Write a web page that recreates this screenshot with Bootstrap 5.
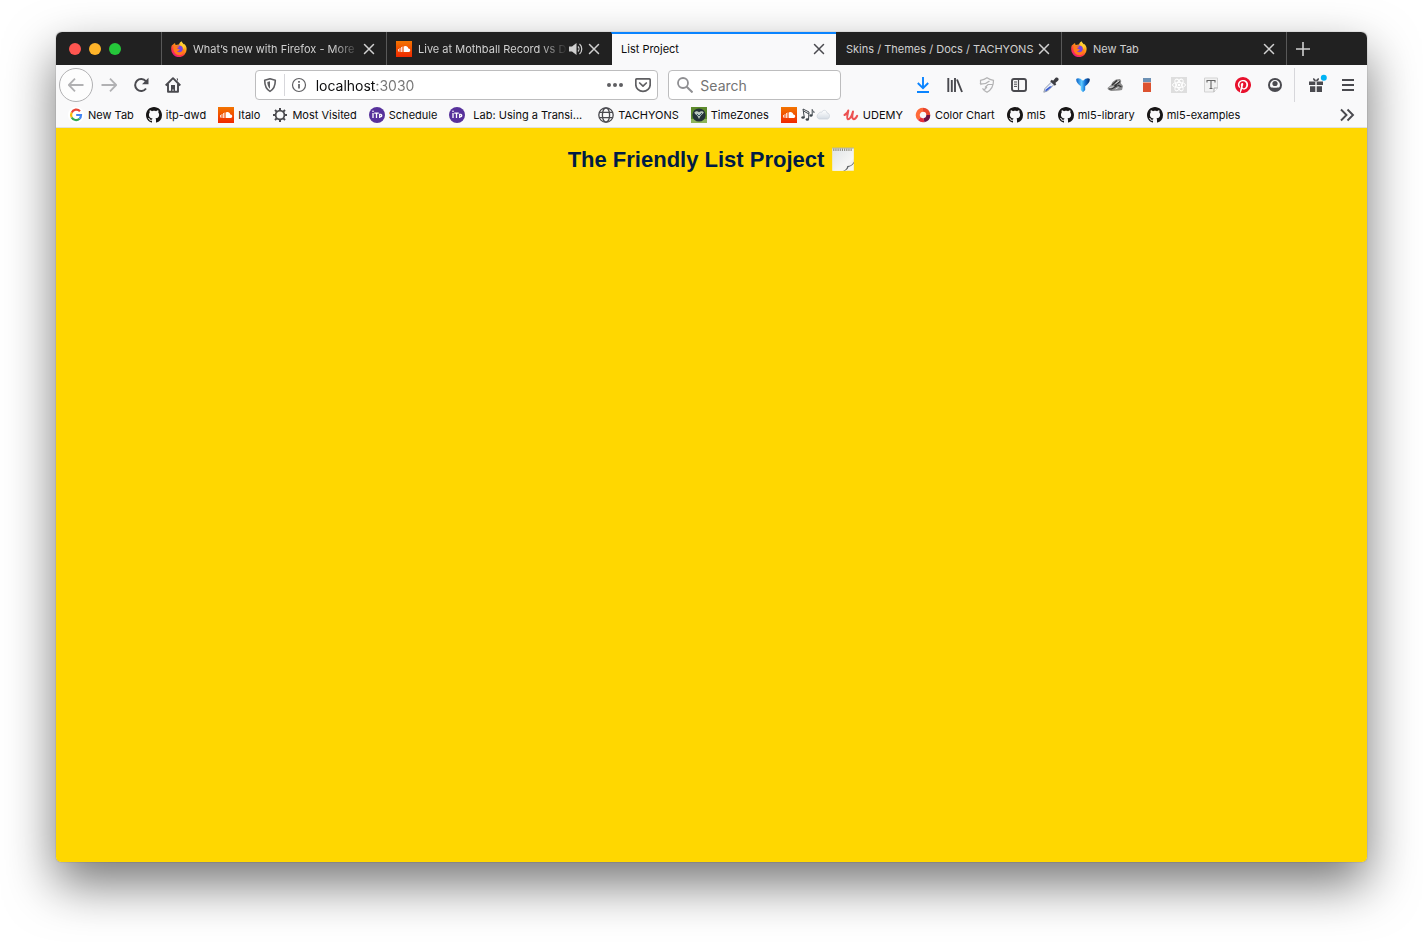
<!DOCTYPE html>
<html lang="en">
<head>
<meta charset="utf-8">
<meta name="viewport" content="width=device-width, initial-scale=1">
<title>List Project</title>
<link href="https://cdn.jsdelivr.net/npm/bootstrap@5.3.0/dist/css/bootstrap.min.css" rel="stylesheet">
<style>
  body { background: #fff; font-family: Inter, "Liberation Sans", sans-serif; font-size: 11px; line-height: 16px; color: #0c0c0d; padding: 32px 56px 80px; }
  .browser { border-radius: 5px; box-shadow: 0 0 1px rgba(0,0,0,.6), 0 22px 50px rgba(0,0,0,.54); }
  .ico { width: 16px; height: 16px; flex: none; display: block; }
  .browser button { border: 0; background: none; padding: 0; color: inherit; display: flex; align-items: center; justify-content: center; flex: none; }

  /* tab strip */
  .tabstrip { height: 33px; background: #212121; color: #d0d0d0; }
  .lights { width: 105px; padding-left: 13px; gap: 8px; }
  .light { width: 12px; height: 12px; border-radius: 50%; }
  .light-red { background: #ff5650; } .light-amber { background: #ffb429; } .light-green { background: #25c73a; }
  .tabs .nav-item { flex: 1 1 0; min-width: 0; border-left: 1px solid #585858; padding: 0 9px; }
  .tabs .nav-item > .ico { margin-right: 6px; }
  .tabs .nav-item.current { background: #f9f9fa; color: #0c0c0d; border-left-color: #212121; border-top: 2px solid #0a84ff; padding-bottom: 2px; }
  .current button { color: #4a4a4f; }
  .tabs .nav-item.current + .nav-item { border-left-color: #212121; }
  .tab-title { flex: 1 1 0; min-width: 0; overflow: hidden; white-space: nowrap; color: inherit; text-decoration: none; }
  .fading { -webkit-mask-image: linear-gradient(90deg, #000 calc(100% - 28px), transparent); mask-image: linear-gradient(90deg, #000 calc(100% - 28px), transparent); }
  .tab-tools { gap: 2px; }
  .newtab { width: 81px; border-left: 1px solid #585858; padding-left: 8px; }

  /* toolbar */
  .chrome { background: #f9f9fa; color: #4a4a4f; }
  .toolbar { height: 40px; padding: 0 3px; }
  .chrome .tool { width: 32px; height: 32px; }
  .chrome .back { width: 34px; height: 34px; border: 1px solid #b1b1b3; border-radius: 50%; background: #fdfdfd; color: #b1b1b3; }
  .chrome .dim { color: #b1b1b3; }
  .spring { flex: 66 1 0; }
  .field { height: 30px; background: #fff; border: 1px solid #bdbdbe; border-radius: 4px; min-width: 0; }
  .address { flex: 404 1 0; margin-right: 10px; }
  .finder { flex: 172 1 0; }
  .field input { border: 0; outline: 0; padding: 2px 0 0; flex: 1 1 0; min-width: 0; width: 0; font-size: 14px; line-height: 20px; background-color: transparent; }
  .field input::placeholder { color: #737373; opacity: 1; }
  .address input { margin-left: 3px; color: transparent; background-image: linear-gradient(90deg, #0c0c0d 61px, #737373 61px); -webkit-background-clip: text; background-clip: text; }
  .address .tool { width: 28px; height: 28px; }
  .finder label { width: 31px; padding-left: 8px; color: #8f8f92; }
  .rule { width: 1px; background: #d7d7db; }
  .rule-field { height: 22px; }
  .rule-bar { height: 34px; margin: 0 5px 0 3px; }

  /* bookmarks */
  .bookmarks { height: 23px; padding: 0 12px 3px; gap: 12px; border-bottom: 1px solid #e0e0e1; }
  .bookmarks a { display: flex; align-items: center; gap: 4px; color: #0c0c0d; text-decoration: none; white-space: nowrap; }

  .page { background: #ffd700; padding-top: 18px; border-radius: 0 0 5px 5px; }
  .page h1 { font: bold 22px/28px "Liberation Sans", Arial, sans-serif; color: #001b44; gap: 7px; margin: 0; }
  .pad { width: 24px; height: 26px; }
</style>
</head>
<body class="min-vh-100 d-flex flex-column">

<svg width="0" height="0" class="position-absolute" aria-hidden="true">
  <defs>
    <linearGradient id="fxBody" x1=".85" y1="0" x2=".2" y2="1"><stop offset="0" stop-color="#fff44f"/><stop offset=".4" stop-color="#ff980e"/><stop offset=".7" stop-color="#ff3647"/><stop offset="1" stop-color="#e31587"/></linearGradient>
    <linearGradient id="scBg" x1="0" y1="0" x2="0" y2="1"><stop offset="0" stop-color="#f27500"/><stop offset="1" stop-color="#f02800"/></linearGradient>
    <linearGradient id="funnel" x1="0" y1="0" x2="1" y2="0"><stop offset="0" stop-color="#0a5fc6"/><stop offset=".4" stop-color="#5fcaff"/><stop offset=".65" stop-color="#1173d6"/><stop offset="1" stop-color="#06275f"/></linearGradient>
    <linearGradient id="paper" x1="0" y1="0" x2="1" y2="1"><stop offset="0" stop-color="#dfe3e6"/><stop offset=".7" stop-color="#f6f6f4"/><stop offset="1" stop-color="#cfd0d0"/></linearGradient>
    <linearGradient id="cloudFill" x1="0" y1="0" x2="0" y2="1"><stop offset="0" stop-color="#fff"/><stop offset="1" stop-color="#d5dce4"/></linearGradient>
  </defs>
  <symbol id="x" viewBox="0 0 16 16"><path d="M3.500 3.500l9 9m0-9l-9 9" stroke="currentColor" stroke-width="1.500" stroke-linecap="round"/></symbol>
  <symbol id="firefox" viewBox="0 0 16 16">
    <path d="M15.400 6.200C15 4.600 14 3.400 13 2.700c.2.500.3.900.3 1.200C12.300 2.200 10.900 1.800 10.600.2 9 1 8.200 2.300 8 3.500 6.800 3.400 5.700 3.600 5 4.100 4.200 3.500 4.100 2.700 4.100 1.900 2.900 2.500 2.100 3.300 1.500 4.300L1.300 3.600C.4 5 .1 6.800.2 8.400a7.700 7.700 0 0 0 15.400.1c0-.8 0-1.600-.2-2.300z" fill="url(#fxBody)"/>
    <circle cx="8" cy="8.300" r="3.900" fill="#7542e5"/>
    <path d="M2.500 5.700c1.300-1.200 2.500-1 3.400-.4.900-.2 1.800 0 2.400.3-.1.900-1.700 1.100-2 1.600.1 1 1.400.6 2.400 1C8.300 10 6.600 9.700 5.900 10.600c2.500 1.700 6.200.4 6-3C14 10 12.800 13.700 9 14.200 4.400 14.600 1.700 10 2.500 5.700z" fill="#ff7a1c"/>
    <path d="M9 4c2.500.6 3.600 2.300 3.500 4.300 1-1.200 1.200-3 .3-4.500L11 1.800z" fill="#ffce32"/>
  </symbol>
  <symbol id="soundcloud" viewBox="0 0 16 16"><path fill="url(#scBg)" d="M0 0h16v16H0z"/><path d="M2.500 8v2.500M4 7v4M5.500 6V11M7 5.500V11" stroke="#fff" stroke-width=".8"/><path d="M8 5.500c2-1 4 .1 4.300 2 1-.2 1.900.6 1.900 1.700S13.400 11 12.500 11H8z" fill="#fff"/></symbol>
  <symbol id="github" viewBox="0 0 16 16"><path fill="#181616" d="M8 0C3.580 0 0 3.580 0 8c0 3.540 2.290 6.530 5.470 7.590.4.070.55-.17.55-.38 0-.19-.01-.82-.01-1.490-2.010.37-2.530-.49-2.690-.94-.09-.23-.48-.94-.82-1.130-.28-.15-.68-.52-.01-.53.63-.01 1.080.58 1.230.82.72 1.210 1.870.87 2.330.66.07-.52.28-.87.51-1.070-1.780-.2-3.640-.89-3.640-3.950 0-.87.31-1.590.82-2.150-.08-.2-.36-1.020.08-2.120 0 0 .67-.21 2.200.82.64-.18 1.320-.27 2-.27s1.360.09 2 .27c1.530-1.040 2.200-.82 2.200-.82.44 1.100.16 1.920.08 2.120.51.56.82 1.270.82 2.150 0 3.070-1.870 3.750-3.650 3.950.29.25.54.73.54 1.480 0 1.070-.01 1.930-.01 2.200 0 .21.15.46.55.38A8.010 8.010 0 0 0 16 8c0-4.420-3.580-8-8-8z"/></symbol>
  <symbol id="itp" viewBox="0 0 16 16"><circle cx="8" cy="8" r="8" fill="#57319b"/><path d="M4 6v5M5.300 6.200h4.400M7.500 6.200V11M10.700 11V7.300h1.200a1.200 1.200 0 0 1 0 2.300h-1.200" stroke="#fff" stroke-width="1.300" fill="none"/><circle cx="4" cy="4.300" r=".8" fill="#fff"/></symbol>
</svg>

<div class="browser d-flex flex-column flex-grow-1">
  <header>
    <div class="tabstrip d-flex rounded-top">
      <div class="lights d-flex align-items-center flex-shrink-0"><span class="light light-red"></span><span class="light light-amber"></span><span class="light light-green"></span></div>
      <ul class="tabs nav flex-nowrap flex-grow-1 align-items-stretch">
        <li class="nav-item d-flex align-items-center">
          <svg class="ico"><use href="#firefox"/></svg><a class="tab-title fading" href="#">What’s new with Firefox - More</a>
          <button type="button" aria-label="Close tab"><svg class="ico"><use href="#x"/></svg></button>
        </li>
        <li class="nav-item d-flex align-items-center">
          <svg class="ico"><use href="#soundcloud"/></svg><a class="tab-title fading" href="#">Live at Mothball Record vs D</a>
          <span class="tab-tools d-flex"><button type="button" aria-label="Mute tab"><svg class="ico" viewBox="0 0 16 16"><path d="M1 5.500h3L8.500 2v12L4 10.500H1z" fill="currentColor"/><path d="M10 5.500c1.300 1.300 1.300 3.700 0 5M11.500 3c3 2.500 3 7.500 0 10" fill="none" stroke="currentColor" stroke-width="1.200"/></svg></button>
          <button type="button" aria-label="Close tab"><svg class="ico"><use href="#x"/></svg></button></span>
        </li>
        <li class="nav-item current d-flex align-items-center">
          <a class="tab-title" href="#" aria-current="page">List Project</a>
          <button type="button" aria-label="Close tab"><svg class="ico"><use href="#x"/></svg></button>
        </li>
        <li class="nav-item d-flex align-items-center">
          <a class="tab-title" href="#">Skins / Themes / Docs / TACHYONS</a>
          <button type="button" aria-label="Close tab"><svg class="ico"><use href="#x"/></svg></button>
        </li>
        <li class="nav-item d-flex align-items-center">
          <svg class="ico"><use href="#firefox"/></svg><a class="tab-title" href="#">New Tab</a>
          <button type="button" aria-label="Close tab"><svg class="ico"><use href="#x"/></svg></button>
        </li>
      </ul>
      <div class="newtab d-flex align-items-center flex-shrink-0"><button type="button" aria-label="Open a new tab"><svg class="ico" viewBox="0 0 16 16"><path d="M8 1v14M1 8h14" stroke="currentColor" stroke-width="1.600"/></svg></button></div>
    </div>

    <div class="chrome">
      <div class="toolbar d-flex align-items-center">
        <button type="button" class="back" aria-label="Back"><svg class="ico" viewBox="0 0 16 16"><path d="M15.500 8H1M7 1.700L.8 8 7 14.300" fill="none" stroke="currentColor" stroke-width="1.800"/></svg></button>
        <button type="button" class="tool dim" aria-label="Forward"><svg class="ico" viewBox="0 0 16 16"><path d="M.5 8H15M9 1.700L15.200 8 9 14.300" fill="none" stroke="currentColor" stroke-width="1.800"/></svg></button>
        <button type="button" class="tool" aria-label="Reload"><svg class="ico" viewBox="0 0 16 16"><path d="M13 11.500A6 6 0 1 1 12.800 4.200" fill="none" stroke="currentColor" stroke-width="2"/><path d="M15.500.8v6.400H9z" fill="currentColor"/></svg></button>
        <button type="button" class="tool" aria-label="Home"><svg class="ico" viewBox="0 0 16 16"><path d="M.7 8.500L8 1.200l7.300 7.300M3 7v7.700h10V7" fill="none" stroke="currentColor" stroke-width="1.900" stroke-linejoin="round"/><path d="M6 8h4v6.500H8.600v-2H7.400v2H6zM11.500 1.500H13v3z" fill="currentColor"/></svg></button>
        <div class="spring"></div>
        <div class="field address d-flex align-items-center">
          <button type="button" class="tool" aria-label="Tracking protection"><svg class="ico" viewBox="0 0 16 16"><path d="M8 1.800l5.300 1.500C13.300 8.500 12 12.200 8 14.400 4 12.200 2.700 8.500 2.700 3.300z" fill="none" stroke="#5f5f62" stroke-width="1.600" stroke-linejoin="round"/><path d="M8 4.300L5.300 5c.1 3 .8 5.100 2.700 6.700z" fill="#5f5f62"/></svg></button>
          <span class="rule rule-field"></span>
          <button type="button" class="tool" aria-label="Site information"><svg class="ico" viewBox="0 0 16 16"><circle cx="8" cy="8" r="6.500" fill="none" stroke="#5f5f62" stroke-width="1.200"/><path d="M8 7v4.500M8 4v1.700" stroke="#5f5f62" stroke-width="1.700"/></svg></button>
          <input type="text" value="localhost:3030" aria-label="Address">
          <button type="button" class="tool" aria-label="Page actions"><svg class="ico" viewBox="0 0 16 16"><g fill="#5f5f62"><circle cx="2" cy="8" r="2"/><circle cx="8" cy="8" r="2"/><circle cx="14" cy="8" r="2"/></g></svg></button>
          <button type="button" class="tool" aria-label="Save to Pocket"><svg class="ico" viewBox="0 0 16 16"><path d="M2 1.800h12a1.200 1.200 0 0 1 1.200 1.200v4.500a7.200 6.800 0 0 1-14.400 0V3A1.200 1.200 0 0 1 2 1.800zM4.700 6L8 9.200 11.300 6" fill="none" stroke="#5f5f62" stroke-width="1.700" stroke-linecap="round" stroke-linejoin="round"/></svg></button>
        </div>
        <div class="field finder d-flex align-items-center">
          <label for="find"><svg class="ico" viewBox="0 0 16 16"><circle cx="6" cy="6" r="5" fill="none" stroke="currentColor" stroke-width="1.800"/><path d="M9.700 9.700l5.800 5.800" stroke="currentColor" stroke-width="2"/></svg></label>
          <input id="find" type="text" placeholder="Search" aria-label="Search">
        </div>
        <div class="spring"></div>
        <button type="button" class="tool" aria-label="Downloads"><svg class="ico" viewBox="0 0 16 16"><path d="M8 0v11M2.800 6L8 11.200 13.200 6M2 15h12" fill="none" stroke="#0a84ff" stroke-width="1.900"/></svg></button>
        <button type="button" class="tool" aria-label="Library"><svg class="ico" viewBox="0 0 16 16"><path d="M1.300 1v14M4.800 3v12M8 1v14M10 2.500L15 15" stroke="currentColor" stroke-width="1.900"/></svg></button>
        <button type="button" class="tool" aria-label="Privacy shield"><svg class="ico" viewBox="0 0 16 16"><path d="M2 8C1.500 6.500 1.400 5 1.500 3.300 4.500 3 6.500 2 8 .8 10 2.300 12 3 14.500 3.300c.1 5.500-2 9.500-6.500 12-2-1-3.500-2.500-4.500-4M.8 6.500c3 .8 6.500.3 9.700-2.500M6 10.500L9 7.500h5.500M5 13l3-3" fill="none" stroke="#b3b3b4" stroke-width="1.200"/></svg></button>
        <button type="button" class="tool" aria-label="Sidebars"><svg class="ico" viewBox="0 0 16 16"><rect x="1" y="2" width="14" height="12" rx="2" fill="none" stroke="currentColor" stroke-width="1.900"/><path d="M7.500 2v12" stroke="currentColor" stroke-width="1.200"/><path d="M3 5h3M3 7.200h3M3 9.400h3" stroke="currentColor"/></svg></button>
        <button type="button" class="tool" aria-label="Eyedropper"><svg class="ico" viewBox="0 0 16 16"><path d="M8.500 5L2 11.500.8 15.200 4.500 14 11 7.500z" fill="#e9eefb" stroke="#8e99ad"/><path d="M7 9.300l2 .2-5 4.300-1.800.5.500-1.800z" fill="#385bd1"/><path d="M7.200 4.200l1.600-1.400 1.300 1L12.600.8c1.800-1.300 4 .9 2.600 2.600L12.300 6l1 1.300-1.500 1.500z" fill="#3d3d42"/></svg></button>
        <button type="button" class="tool" aria-label="Filter"><svg class="ico" viewBox="0 0 16 16"><path d="M1.200 2C2.500.7 5.500 1.200 8 3.800 10.500 1.200 13.500.7 14.800 2c.3 3-2 5.500-4.600 7.300V13L8 15.200 5.800 13V9.300C3.200 7.500.9 5 1.200 2z" fill="url(#funnel)"/></svg></button>
        <button type="button" class="tool" aria-label="Badger"><svg class="ico" viewBox="0 0 16 16"><path d="M.5 11L4 8l1.500-3L9 2.500l4-.5 1.300 2-.6 2L16 9l-1 4-3 .5-8 .5-3-1.500z" fill="#8b8b8b"/><path d="M5 8l5-4.500M7.500 9L13 4.500M4.500 12l6-3.500M11 8l3.500 2M2 12h3" stroke="#333" stroke-width="1.200"/><path d="M2.500 10.500l4-.8M8.500 6.500L12 4M8.500 12l3-1.500" stroke="#ddd"/></svg></button>
        <button type="button" class="tool" aria-label="Colour blocks"><svg class="ico" viewBox="0 0 16 16"><path fill="#6d91b4" d="M4 1h8v4H4z"/><path fill="#dc5230" d="M4 5.500h8V15H4z"/></svg></button>
        <button type="button" class="tool" aria-label="React tools"><svg class="ico" viewBox="0 0 16 16"><path fill="#dedede" d="M0 0h16v16H0z"/><g fill="none" stroke="#fff"><ellipse cx="8" cy="8" rx="6.500" ry="2.600"/><ellipse cx="8" cy="8" rx="6.500" ry="2.600" transform="rotate(60 8 8)"/><ellipse cx="8" cy="8" rx="6.500" ry="2.600" transform="rotate(120 8 8)"/></g><circle cx="8" cy="8" r="1.300" fill="#fff"/></svg></button>
        <button type="button" class="tool" aria-label="Font finder"><svg class="ico" viewBox="0 0 16 16"><path d="M1.500 1h13v10l-3.500 4H1.500z" fill="#f2f2f2" stroke="#d3d3d3"/><path d="M14.500 11H11v4" fill="#fff" stroke="#aaa"/><path d="M4 5.500V3.500h8v2M8 3.500v8M6.500 11.500h3" fill="none" stroke="#666" stroke-width="1.100"/></svg></button>
        <button type="button" class="tool" aria-label="Pinterest"><svg class="ico" viewBox="0 0 16 16"><circle cx="8" cy="8" r="7.500" fill="#fff"/><path fill="#e8112d" d="M8 0a8 8 0 0 0-2.915 15.452c-.07-.633-.134-1.606.027-2.297.146-.625.938-3.977.938-3.977s-.239-.479-.239-1.187c0-1.113.645-1.943 1.448-1.943.682 0 1.012.512 1.012 1.127 0 .686-.437 1.712-.663 2.663-.188.796.4 1.446 1.185 1.446 1.422 0 2.515-1.500 2.515-3.664 0-1.915-1.377-3.254-3.342-3.254-2.276 0-3.612 1.707-3.612 3.471 0 .688.265 1.425.595 1.826a.24.24 0 0 1 .056.23c-.061.252-.196.796-.222.907-.035.146-.116.177-.268.107-1-.465-1.624-1.926-1.624-3.100 0-2.523 1.834-4.840 5.286-4.840 2.775 0 4.932 1.977 4.932 4.620 0 2.757-1.739 4.976-4.151 4.976-.811 0-1.573-.421-1.834-.919l-.498 1.902c-.181.695-.669 1.566-.995 2.097A8 8 0 1 0 8 0z"/></svg></button>
        <button type="button" class="tool" aria-label="Account"><svg class="ico" viewBox="0 0 16 16"><circle cx="8" cy="8" r="6" fill="none" stroke="currentColor" stroke-width="2"/><path d="M3 10c1.500.6 3 .8 5 .8s3.500-.2 5-.8c-1 3-3 4-5 4s-4-1-5-4z" fill="currentColor"/><circle cx="8" cy="6.500" r="2.600" fill="currentColor"/></svg></button>
        <span class="rule rule-bar"></span>
        <button type="button" class="tool" aria-label="What's new"><svg class="ico overflow-visible" viewBox="0 0 16 16"><path d="M1 4.500h6.300V8H1zM8.700 4.500H15V8H8.700zM2 9.200h5.300V15H2zM8.700 9.200H14V15H8.700z" fill="currentColor"/><path d="M8 4.500C5.500 4 4.800 2.500 5 1.200 6.500 1 7.500 2 8 4c.5-2 1.500-3 3-2.800.2 1.300-.5 2.800-3 3.300z" fill="currentColor"/><circle cx="15.800" cy=".8" r="3" fill="#00b3f4"/></svg></button>
        <button type="button" class="tool" aria-label="Menu"><svg class="ico" viewBox="0 0 16 16"><path d="M2 3h12M2 8h12M2 13h12" stroke="currentColor" stroke-width="1.900"/></svg></button>
      </div>

      <nav class="bookmarks d-flex align-items-center" aria-label="Bookmarks">
        <a href="#"><svg class="ico" viewBox="0 0 16 16"><circle cx="8" cy="8" r="8" fill="#fff"/><g fill="none" stroke-width="2.200"><path d="M12 4.300A5 5 0 0 0 3.700 5.600" stroke="#ea4335"/><path d="M3.700 5.600a5 5 0 0 0 0 4.800" stroke="#fbbc05"/><path d="M3.700 10.400a5 5 0 0 0 7.800 1.300" stroke="#34a853"/><path d="M11.500 11.700C12.700 10.600 13 9.500 13 8H8.200" stroke="#4285f4"/></g></svg>New Tab</a>
        <a href="#"><svg class="ico"><use href="#github"/></svg>itp-dwd</a>
        <a href="#"><svg class="ico"><use href="#soundcloud"/></svg>Italo</a>
        <a href="#"><svg class="ico" viewBox="0 0 16 16"><circle cx="8" cy="8" r="4.400" fill="none" stroke="#4a4a4f" stroke-width="1.800"/><path d="M8 1v2.500M8 12.500V15M1 8h2.500M12.500 8H15M3 3l1.900 1.900M11.100 11.100L13 13M13 3l-1.900 1.900M4.900 11.100L3 13" stroke="#4a4a4f" stroke-width="2"/></svg>Most Visited</a>
        <a href="#"><svg class="ico"><use href="#itp"/></svg>Schedule</a>
        <a href="#" class="me-1"><svg class="ico me-1"><use href="#itp"/></svg>Lab: Using a Transi...</a>
        <a href="#"><svg class="ico" viewBox="0 0 16 16"><g fill="none" stroke="#4a4a4f" stroke-width="1.300"><circle cx="8" cy="8" r="7.200"/><ellipse cx="8" cy="8" rx="3.600" ry="7.200"/><path d="M1.500 5.300h13M1.500 10.700h13"/></g></svg>TACHYONS</a>
        <a href="#"><svg class="ico" viewBox="0 0 16 16"><path fill="#5d8a2c" d="M0 0h16v16H0z"/><path fill="#8db45a" d="M0 12h16v4H0z"/><circle cx="8" cy="8" r="6.600" fill="#243238"/><path d="M3.300 5.500C5 3.500 7 4 8 5.200 9.500 4 12 4 12.800 5.500 12 7 10.500 7.500 9.500 9l-1.500 3L6.500 9C5.500 7.500 4 7.500 3.300 5.500z" fill="#bac7bd"/><path d="M6 7l2 2 3-3" stroke="#33505f" fill="none"/></svg>TimeZones</a>
        <a href="#" aria-label="Music cloud"><svg class="ico" viewBox="0 0 16 16"><use href="#soundcloud"/></svg><svg width="30" height="16" viewBox="0 0 30 16"><g fill="#3f464c"><ellipse cx="2" cy="10.500" rx="1.700" ry="1.300"/><ellipse cx="6.300" cy="12.500" rx="1.700" ry="1.300"/><ellipse cx="10" cy="8.500" rx="1.500" ry="1.200"/></g><path d="M3.300 10.500L2 2l6 3-.5 7.500M2.500 4L8 7M11.200 8.500V2.500c.2 1.500 2.300 1.500 1.800 3.500" fill="none" stroke="#3f464c"/><path d="M18 12a3 3 0 0 1-.2-5.500C18.500 5 20 5 20.700 5.300 22 2.200 25.800 3 26 6c3 0 3.500 5 .5 6z" fill="url(#cloudFill)" stroke="#c9d0d8" stroke-width=".7"/></svg></a>
        <a href="#"><svg class="ico" viewBox="0 0 16 16"><path d="M1.500 8C3.500 7 5 5 5.300 3.500 5 6.500 3 11.500 5 12.200 7.500 12.300 9 8 10 4.500 9.300 8 8.500 12 10.800 12.200c1.500 0 2.500-1.500 3.400-3.400" fill="none" stroke="#ec5252" stroke-width="2" stroke-linecap="round" stroke-linejoin="round"/></svg>UDEMY</a>
        <a href="#"><svg class="ico" viewBox="0 0 16 16"><g fill="none" stroke-width="4"><path d="M8 2.700a5.300 5.300 0 0 0-3.700 9" stroke="#ff6a39"/><path d="M8 2.700a5.300 5.300 0 0 1 5.300 5.300" stroke="#e8462e"/><path d="M13.300 8A5.300 5.300 0 0 1 9 13.200" stroke="#6c1244"/><path d="M9 13.200a5.300 5.300 0 0 1-4.700-1.500" stroke="#e5303d"/></g></svg>Color Chart</a>
        <a href="#"><svg class="ico"><use href="#github"/></svg>ml5</a>
        <a href="#"><svg class="ico"><use href="#github"/></svg>ml5-library</a>
        <a href="#"><svg class="ico"><use href="#github"/></svg>ml5-examples</a>
        <button type="button" class="ms-auto" aria-label="More bookmarks"><svg class="ico" viewBox="0 0 16 16"><path d="M2 2.500L7.500 8 2 13.500M8.500 2.500L14 8l-5.500 5.500" fill="none" stroke="currentColor" stroke-width="1.900"/></svg></button>
      </nav>
    </div>
  </header>

  <main class="page flex-grow-1">
    <h1 class="d-flex justify-content-center align-items-center">The Friendly List Project
      <svg class="pad" viewBox="0 0 22 24" aria-hidden="true"><path d="M1 1h20v13l-7 8H1z" fill="url(#paper)"/><path d="M1 22h20v-8z" fill="#f4f4f2"/><path d="M11 22c3-1 3.500-2.500 4-4.500 2.500 0 4.500-1 6-4v1.500c-1.500 2-3 3-5 3.500-.5 2-2 3-3.500 3.500z" fill="#5b6063"/><path d="M2 2.500h18" stroke="#8d8b7d" stroke-width="2.500" stroke-dasharray="1 1"/><path d="M1 1h20" stroke="#b9b59d"/></svg>
    </h1>
  </main>
</div>

<script src="https://cdn.jsdelivr.net/npm/bootstrap@5.3.0/dist/js/bootstrap.bundle.min.js"></script>
</body>
</html>
